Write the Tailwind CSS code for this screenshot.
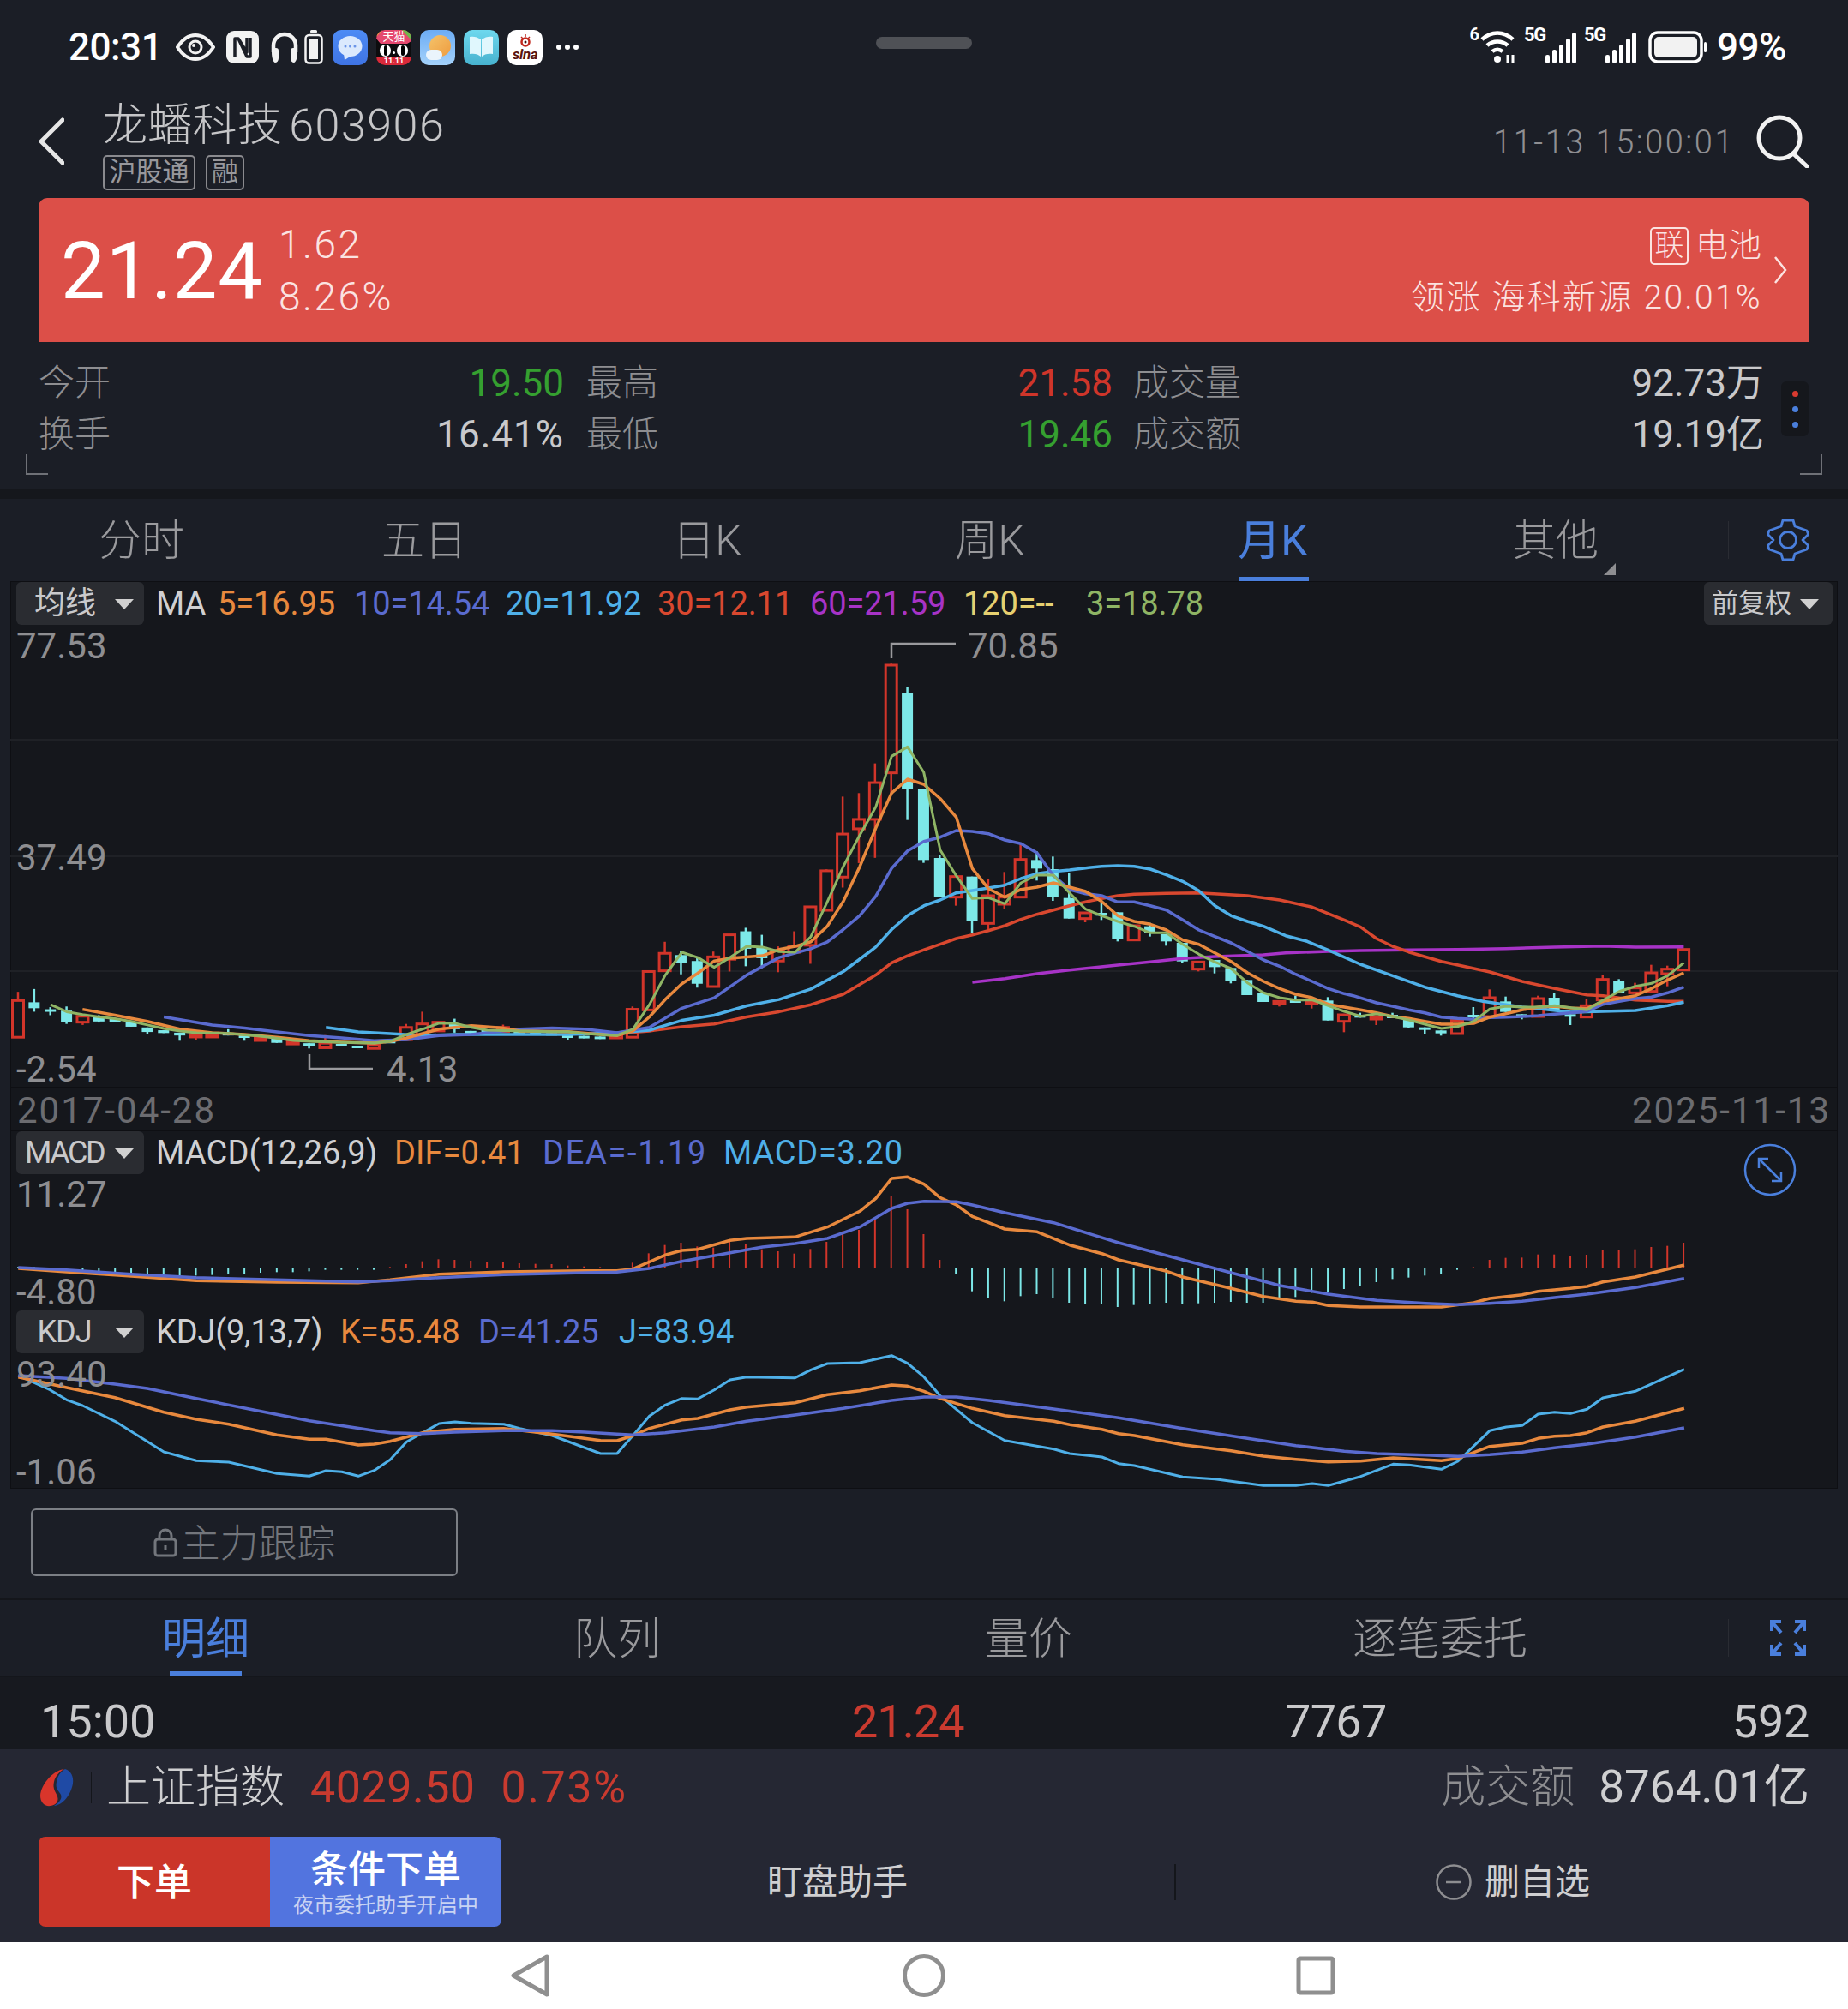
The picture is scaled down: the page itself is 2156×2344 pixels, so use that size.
<!DOCTYPE html>
<html lang="zh-CN">
<head>
  <meta charset="UTF-8" />
  <title>龙蟠科技 603906</title>
  <script src="https://cdn.jsdelivr.net/npm/@tailwindcss/browser@4"></script>
</head>
<body class="bg-[#1b1e26] font-[Roboto,'Noto_Sans_CJK_SC',sans-serif] text-[#c9c9cb]">
<div class="w-[2156px] h-[2344px] overflow-hidden flex flex-col">

  <!-- status bar -->
  <div class="relative h-[100px] shrink-0 flex items-center pl-[80px] pr-[72px] pt-[10px]">
    <span class="text-[44px] tracking-[-0.5px] text-white w-[125px] font-medium">20:31</span>
    <svg class="w-[46px] h-[32px] mr-[13px]" viewBox="0 0 46 32" fill="none" stroke="#f2f2f2" stroke-width="4"><path d="M2 16C9 5 16 2 23 2s14 3 21 14c-7 11-14 14-21 14S9 27 2 16z"/><circle cx="23" cy="16" r="8.500" fill="#f2f2f2" stroke="none"/><circle cx="23" cy="16" r="5.500" fill="#1b1e26" stroke="none"/><circle cx="21" cy="14" r="2" fill="#f2f2f2" stroke="none"/></svg>
    <svg class="w-[38px] h-[38px] mr-[13px]" viewBox="0 0 38 38"><rect x="0" y="0" width="38" height="38" rx="9" fill="#f2f2f2"/><path d="M10 30V9h4l10 16V8M14 9l10 21h4V8" fill="none" stroke="#1b1e26" stroke-width="3.500" stroke-linejoin="round"/></svg>
    <svg class="w-[34px] h-[38px] mr-[6px]" viewBox="0 0 34 38" fill="none" stroke="#f2f2f2" stroke-width="4.500"><path d="M4 25V17a13 13 0 0 1 26 0v8"/><path d="M2 25c0-3 2-5 5-5 2 0 3 1 3 3v9c0 3-2 5-4 5s-4-5-4-12zM32 25c0-3-2-5-5-5-2 0-3 1-3 3v9c0 3 2 5 4 5s4-5 4-12z" fill="#f2f2f2" stroke="none"/></svg>
    <svg class="w-[22px] h-[40px] mr-[11px]" viewBox="0 0 22 40" fill="none" stroke="#f2f2f2" stroke-width="2.500"><rect x="1.500" y="6" width="19" height="32.500" rx="4"/><rect x="6" y="11" width="10" height="23" fill="#f2f2f2" stroke="none"/><rect x="7" y="0" width="8" height="3.500" rx="1.500" fill="#f2f2f2" stroke="none"/></svg>
    <!-- app notification icons -->
    <div class="w-[41px] h-[41px] mr-[10px] rounded-[10px] bg-linear-to-b from-[#4d8bf5] to-[#3f74e4] flex items-center justify-center">
      <svg class="w-[33px] h-[33px]" viewBox="0 0 33 33"><ellipse cx="16.500" cy="15" rx="14" ry="12" fill="#dbe9fd"/><path d="M9 23l1 8 8-5z" fill="#dbe9fd"/><circle cx="11" cy="15" r="1.500" fill="#6b95e8"/><circle cx="16.500" cy="15" r="1.500" fill="#6b95e8"/><circle cx="22" cy="15" r="1.500" fill="#6b95e8"/></svg>
    </div>
    <div class="relative w-[41px] h-[41px] mr-[10px] rounded-[10px] overflow-hidden bg-[#0c0c0e]">
      <svg class="absolute top-0 left-0 w-[41px] h-[16px]" viewBox="0 0 41 16"><rect width="41" height="16" fill="#e5486e"/><path d="M30 0h11v12z" fill="#6fb84a"/><path d="M0 0h7L0 8z" fill="#e6a23a"/><path d="M0 16V10l5 6zM41 16V13l-5 3z" fill="#0c0c0e"/></svg>
      <div class="absolute bottom-0 inset-x-0 h-[10px] bg-[#d92a3a]"></div>
      <div class="absolute top-[17px] left-[4px] w-[13px] h-[14px] rounded-full bg-white"></div>
      <div class="absolute top-[17px] right-[4px] w-[13px] h-[14px] rounded-full bg-white"></div>
      <div class="absolute top-[18px] left-[8.500px] w-[4px] h-[12px] rounded-full bg-black"></div>
      <div class="absolute top-[18px] right-[8.500px] w-[4px] h-[12px] rounded-full bg-black"></div>
      <div class="absolute top-[25px] left-[19px] w-[3px] h-[3px] rounded-full bg-white"></div>
      <span class="absolute top-0 inset-x-0 text-center text-[13px] leading-[15px] text-white">天猫</span>
      <span class="absolute bottom-0 inset-x-0 text-center text-[9px] leading-[10px] font-bold text-white">11.11</span>
    </div>
    <div class="relative w-[41px] h-[41px] mr-[10px] rounded-[10px] overflow-hidden bg-linear-to-b from-[#6cacf4] to-[#a4d2fb]">
      <div class="absolute top-[6px] left-[11px] w-[25px] h-[25px] rounded-full bg-linear-to-br from-[#f4c36a] to-[#ee9c3e]"></div>
      <div class="absolute bottom-[6px] left-[7px] w-[19px] h-[12px] rounded-full bg-[#eaf4fc]"></div>
    </div>
    <div class="w-[41px] h-[41px] mr-[10px] rounded-[10px] bg-linear-to-b from-[#6ed8ee] to-[#47b2cf] flex items-center justify-center">
      <svg class="w-[31px] h-[29px]" viewBox="0 0 31 29"><path d="M15 5C11 2 6 1 2 2v20c5-1 10 0 13 3zM16 5c4-3 9-4 13-3v20c-5-1-10 0-13 3z" fill="#e0f7fd"/></svg>
    </div>
    <div class="w-[41px] h-[41px] mr-[16px] rounded-[10px] bg-white flex flex-col items-center justify-center leading-none">
      <svg class="w-[20px] h-[15px]" viewBox="0 0 20 15" fill="none" stroke="#c0281e" stroke-width="2.500"><circle cx="10" cy="9" r="4.500"/><circle cx="10" cy="9" r="1.500" fill="#3a1010" stroke="none"/><path d="M5 3l2 2M10 0v3M15 3l-2 2" stroke-width="1.500"/></svg>
      <span class="text-[17px] leading-[16px] font-bold italic tracking-[-0.5px] text-[#5a1410]">sina</span>
    </div>
    <span class="flex gap-[4px]"><i class="block w-[6px] h-[6px] rounded-full bg-white"></i><i class="block w-[6px] h-[6px] rounded-full bg-white"></i><i class="block w-[6px] h-[6px] rounded-full bg-white"></i></span>
    <div class="absolute left-[1022px] top-[43px] w-[112px] h-[14px] rounded-full bg-[#4f5156]"></div>
    <div class="ml-auto flex items-center text-white">
      <span class="text-[20px] leading-[20px] font-bold self-start -mt-[3px]">6</span>
      <svg class="w-[44px] h-[40px] mr-[8px]" viewBox="0 0 44 40" fill="none" stroke="#fff" stroke-width="4.500"><path d="M3 11c11-10 25-10 36 0M9 18c7-6 17-6 24 0M15 25c4-3 8-3 12 0"/><circle cx="21" cy="34" r="4" fill="#fff" stroke="none"/><path d="M33 29v10M39 29v10" stroke-width="3"/></svg>
      <span class="text-[22px] leading-[22px] font-bold self-start -mt-[3px] tracking-[-1.500px] w-[25px]">5G</span>
      <svg class="w-[36px] h-[38px] mr-[9px]" viewBox="0 0 36 38" fill="#fff"><rect x="0" y="28" width="5" height="10" rx="2"/><rect x="8" y="22" width="5" height="16" rx="2"/><rect x="16" y="16" width="5" height="22" rx="2"/><rect x="24" y="9" width="5" height="29" rx="2"/><rect x="31" y="2" width="5" height="36" rx="2"/></svg>
      <span class="text-[22px] leading-[22px] font-bold self-start -mt-[3px] tracking-[-1.500px] w-[25px]">5G</span>
      <svg class="w-[36px] h-[38px] mr-[14px]" viewBox="0 0 36 38" fill="#fff"><rect x="0" y="28" width="5" height="10" rx="2"/><rect x="8" y="22" width="5" height="16" rx="2"/><rect x="16" y="16" width="5" height="22" rx="2"/><rect x="24" y="9" width="5" height="29" rx="2"/><rect x="31" y="2" width="5" height="36" rx="2"/></svg>
      <svg class="w-[68px] h-[38px] mr-[12px]" viewBox="0 0 68 38" fill="none"><rect x="2" y="2" width="60" height="34" rx="9" stroke="#fff" stroke-width="3.500"/><rect x="7" y="7" width="50" height="24" rx="5" fill="#f2f2f2"/><rect x="65" y="13" width="3" height="12" rx="1.500" fill="#fff"/></svg>
      <span class="text-[44px] tracking-[-0.5px] font-medium leading-none">99%</span>
    </div>
  </div>

  <!-- header -->
  <div class="h-[131px] shrink-0 flex items-start pl-[45px] pr-[44px]">
    <svg class="w-[30px] h-[56px] mt-[37px] mr-[45px]" viewBox="0 0 30 56" fill="none" stroke="#e6e6e6" stroke-width="5" stroke-linecap="round" stroke-linejoin="round"><path d="M28 3L3 28l25 25"/></svg>
    <div class="flex flex-col">
      <div class="text-[52px] leading-[60px] h-[60px] mt-[17px] font-light text-[#c6c6c8] flex items-center"><span class="tracking-[0.3px]">龙蟠科技</span><span class="ml-[8px] tracking-[1.500px]">603906</span></div>
      <div class="flex gap-[12px] mt-[4px]">
        <span class="w-[108px] h-[41px] border-2 border-[#8a8a8e] rounded-[5px] text-[31px] leading-[36px] text-center text-[#98989c]">沪股通</span>
        <span class="w-[45px] h-[41px] border-2 border-[#8a8a8e] rounded-[5px] text-[31px] leading-[36px] text-center text-[#98989c]">融</span>
      </div>
    </div>
    <span class="ml-auto mt-[46px] mr-[26px] text-[38px] leading-[40px] tracking-[2.500px] font-light text-[#8f8f92]">11-13 15:00:01</span>
    <svg class="w-[62px] h-[62px] mt-[34px] -translate-x-[1px]" viewBox="0 0 62 62" fill="none" stroke="#f2f2f2" stroke-width="5" stroke-linecap="round"><circle cx="27" cy="27" r="24"/><path d="M43 45l16 15"/></svg>
  </div>

  <!-- price banner -->
  <div class="mx-[45px] h-[168px] shrink-0 rounded-t-[10px] bg-[#dc4f48] flex items-center pl-[26px] pr-[26px] text-[#fbe3e1]">
    <span class="text-[92px] font-normal tracking-[1px] text-white w-[254px] leading-none pt-[4px]">21.24</span>
    <div class="flex flex-col text-[46px] leading-[61px] font-light tracking-[2.500px] pt-[2px]"><span>1.62</span><span>8.26%</span></div>
    <div class="ml-auto flex flex-col items-end font-light pt-[3px]">
      <div class="flex items-center h-[60px]"><span class="w-[45px] h-[44px] border-2 border-[#fbe3e1] rounded-[5px] text-[34px] leading-[38px] text-center mr-[8px]">联</span><span class="text-[38px] tracking-[1px]">电池</span></div>
      <div class="text-[39px] h-[60px] leading-[60px] tracking-[2.300px]">领涨 海科新源 20.01%</div>
    </div>
    <svg class="w-[16px] h-[34px] ml-[13px]" viewBox="0 0 16 34" fill="none" stroke="#fbe3e1" stroke-width="2.500"><path d="M2 2l12 15L2 32"/></svg>
  </div>

  <!-- stats -->
  <div class="relative h-[171px] shrink-0 pl-[45px] pt-[18px] text-[42px] leading-[60px] text-[#c9c9cb]">
    <div class="grid grid-cols-[613px_26px_614px_24px_736px]">
      <div class="flex justify-between"><span class="font-light text-[#8e8e91]">今开</span><span class="text-[44px] text-[#35a030]">19.50</span></div><div></div>
      <div class="flex justify-between"><span class="font-light text-[#8e8e91]">最高</span><span class="text-[44px] text-[#cf352a]">21.58</span></div><div></div>
      <div class="flex justify-between"><span class="font-light text-[#8e8e91]">成交量</span><span class="text-[44px]">92.73万</span></div>
      <div class="flex justify-between"><span class="font-light text-[#8e8e91]">换手</span><span class="text-[44px] tracking-[1px]">16.41%</span></div><div></div>
      <div class="flex justify-between"><span class="font-light text-[#8e8e91]">最低</span><span class="text-[44px] text-[#35a030]">19.46</span></div><div></div>
      <div class="flex justify-between"><span class="font-light text-[#8e8e91]">成交额</span><span class="text-[44px]">19.19亿</span></div>
    </div>
    <div class="absolute left-[2078px] top-[46px] w-[32px] h-[64px] rounded-[6px] bg-[#15171c] flex flex-col items-center justify-center gap-[11px]">
      <i class="block w-[7px] h-[7px] rounded-full bg-[#d93a30]"></i><i class="block w-[7px] h-[7px] rounded-full bg-[#4a7fdc]"></i><i class="block w-[7px] h-[7px] rounded-full bg-[#4a7fdc]"></i>
    </div>
    <svg class="absolute left-[30px] top-[131px] w-[26px] h-[24px]" viewBox="0 0 26 24" fill="none" stroke="#6f7177" stroke-width="2"><path d="M1 0v23h25"/></svg>
    <svg class="absolute left-[2100px] top-[131px] w-[26px] h-[24px]" viewBox="0 0 26 24" fill="none" stroke="#6f7177" stroke-width="2"><path d="M25 0v23H0"/></svg>
  </div>
  <div class="h-[12px] shrink-0 bg-[#15171c]"></div>

  <!-- period tabs -->
  <div class="h-[96px] shrink-0 flex items-center text-[50px] font-light text-[#9a9a9d]">
    <div class="w-[330px] text-center pt-[2px]">分时</div>
    <div class="w-[330px] text-center pt-[2px]">五日</div>
    <div class="w-[330px] text-center pt-[2px]">日K</div>
    <div class="w-[330px] text-center pt-[2px]">周K</div>
    <div class="relative w-[330px] text-center text-[#4a7fdc] font-normal h-full flex items-center justify-center pt-[2px]">月K<i class="absolute bottom-0 left-[125px] w-[82px] h-[5px] bg-[#4a7fdc]"></i></div>
    <div class="relative w-[330px] text-center pt-[2px]">其他<i class="absolute right-[95px] bottom-[-2px] w-0 h-0 border-l-[14px] border-l-transparent border-b-[14px] border-b-[#8e8e91]"></i></div>
    <div class="w-px h-[44px] bg-[#2a2c33] ml-[36px]"></div>
    <svg class="w-[60px] h-[60px] ml-[39px]" viewBox="17 10 60 60" fill="none" stroke="#4a7fdc" stroke-width="2.800" stroke-linejoin="round"><path d="M41 17H53L55 24L62 26.500L69 29L70.700 33.500L64 40L70.700 46.500L69 51L62 53.500L55 56L53 63H41L39 56L32 53.500L25 51L23.500 46.500L30 40L23.500 33.500L25 29L32 26.500L39 24Z"/><circle cx="47" cy="40" r="9.500"/></svg>
  </div>

  <!-- chart -->
  <div class="mx-[12px] w-[2132px] shrink-0 bg-[#15171c] border-x border-[#0e0f13] text-[42px]">
    <div class="relative h-[590px] border-t border-[#0e0f13]">
      <svg id="mainChart" class="absolute -left-px -top-px w-[2132px] h-[590px]" viewBox="12 678 2132 590"></svg>
      <div class="relative flex items-center h-[50px] pl-[6px] text-[38px] whitespace-nowrap">
        <div class="relative w-[149px] h-[50px] rounded-[6px] bg-[#2a2c31] flex items-center text-[36px] text-[#c9c9cb]"><span class="w-[114px] text-center">均线</span><i class="absolute right-[12px] top-[20px] w-0 h-0 border-x-[11px] border-x-transparent border-t-[12px] border-t-[#d0d0d0]"></i></div>
        <span class="absolute left-[169px] text-[#d0d0d2]">MA</span>
        <span class="absolute left-[241px] tracking-[-0.1px] text-[#e8893e]">5=16.95</span>
        <span class="absolute left-[400px] tracking-[-0.1px] text-[#5a6bcf]">10=14.54</span>
        <span class="absolute left-[577px] tracking-[-0.1px] text-[#4fb0e8]">20=11.92</span>
        <span class="absolute left-[754px] tracking-[-0.1px] text-[#d9482f]">30=12.11</span>
        <span class="absolute left-[932px] tracking-[-0.1px] text-[#a733c7]">60=21.59</span>
        <span class="absolute left-[1111px] tracking-[-0.1px] text-[#e6d070]">120=--</span>
        <span class="absolute left-[1254px] tracking-[-0.1px] text-[#8fb565]">3=18.78</span>
        <div class="absolute left-[1975px] top-0 w-[150px] h-[50px] rounded-[6px] bg-[#2a2c31] flex items-center pl-[9px] text-[31px] text-[#c9c9cb]"><span>前复权</span><i class="absolute right-[16px] top-[20px] w-0 h-0 border-x-[11px] border-x-transparent border-t-[12px] border-t-[#d0d0d0]"></i></div>
      </div>
      <span class="absolute left-[6px] top-[50px] leading-[50px] text-[#8e8e91]">77.53</span>
      <span class="absolute left-[6px] top-[297px] leading-[50px] text-[#8e8e91]">37.49</span>
      <span class="absolute left-[6px] top-[544px] leading-[50px] text-[#8e8e91]">-2.54</span>
      <span class="absolute left-[1116px] top-[50px] leading-[50px] text-[#8e8e91]">70.85</span>
      <span class="absolute left-[438px] top-[544px] leading-[50px] tracking-[0.5px] text-[#8e8e91]">4.13</span>
    </div>
    <div class="h-[51px] flex items-center justify-between px-[7px] pt-[3px] border-t border-[#0e0f13] tracking-[2px] text-[#6c6c70]"><span>2017-04-28</span><span>2025-11-13</span></div>
    <div class="relative h-[209px] border-t border-[#0e0f13]">
      <svg id="macdChart" class="absolute -left-px -top-px w-[2132px] h-[209px]" viewBox="12 1319 2132 209"></svg>
      <div class="relative flex items-center h-[50px] pl-[6px] text-[38px] whitespace-nowrap">
        <div class="relative w-[149px] h-[50px] rounded-[6px] bg-[#2a2c31] flex items-center text-[36px] text-[#c9c9cb] tracking-[-2.500px]"><span class="w-[112px] text-center">MACD</span><i class="absolute right-[12px] top-[20px] w-0 h-0 border-x-[11px] border-x-transparent border-t-[12px] border-t-[#d0d0d0]"></i></div>
        <span class="absolute left-[169px] tracking-[0.2px] text-[#d0d0d2]">MACD(12,26,9)</span>
        <span class="absolute left-[447px] tracking-[0.1px] text-[#e8893e]">DIF=0.41</span>
        <span class="absolute left-[620px] tracking-[1.700px] text-[#5a6bcf]">DEA=-1.19</span>
        <span class="absolute left-[831px] tracking-[0.8px] text-[#4fb0e8]">MACD=3.20</span>
      </div>
      <span class="absolute left-[6px] top-[49px] leading-[50px] text-[#8e8e91]">11.27</span>
      <span class="absolute left-[6px] top-[163px] leading-[50px] text-[#8e8e91]">-4.80</span>
      <svg class="absolute left-[2021px] top-[14px] w-[62px] h-[62px]" viewBox="0 0 62 62" fill="none" stroke="#4a7fdc" stroke-width="2.500"><circle cx="31" cy="31" r="29"/><path d="M18 18l26 26M18 29V18h11M44 33v11H33" stroke-width="2.500"/></svg>
    </div>
    <div class="relative h-[209px] border-y border-[#0e0f13]">
      <svg id="kdjChart" class="absolute -left-px -top-px w-[2132px] h-[209px]" viewBox="12 1528 2132 209"></svg>
      <span class="absolute left-[6px] top-[50px] leading-[50px] text-[#8e8e91]">93.40</span>
      <span class="absolute left-[6px] top-[164px] leading-[50px] text-[#8e8e91]">-1.06</span>
      <div class="relative flex items-center h-[50px] pl-[6px] text-[38px] whitespace-nowrap">
        <div class="relative w-[149px] h-[50px] rounded-[6px] bg-[#2a2c31] flex items-center text-[36px] text-[#c9c9cb]"><span class="w-[112px] text-center tracking-[-1px]">KDJ</span><i class="absolute right-[12px] top-[20px] w-0 h-0 border-x-[11px] border-x-transparent border-t-[12px] border-t-[#d0d0d0]"></i></div>
        <span class="absolute left-[169px] tracking-[-0.2px] text-[#d0d0d2]">KDJ(9,13,7)</span>
        <span class="absolute left-[384px] tracking-[-0.1px] text-[#e8893e]">K=55.48</span>
        <span class="absolute left-[545px] tracking-[-0.1px] text-[#5a6bcf]">D=41.25</span>
        <span class="absolute left-[709px] tracking-[-0.5px] text-[#4fb0e8]">J=83.94</span>
      </div>
    </div>
  </div>

  <!-- locked feature button -->
  <div class="h-[128px] shrink-0 pl-[36px] pt-[23px]">
    <div class="w-[498px] h-[79px] border-2 border-[#7c7f85] rounded-[6px] flex items-center justify-center gap-[3px] text-[45px] font-light text-[#73767c]">
      <svg class="w-[30px] h-[34px]" viewBox="0 0 30 34" fill="none" stroke="#73767c" stroke-width="3"><rect x="3" y="13" width="24" height="19" rx="3"/><path d="M8 13V9a7 7 0 0 1 14 0v4"/><path d="M15 20v5"/></svg>
      <span class="pt-[4px]">主力跟踪</span>
    </div>
  </div>

  <!-- detail tabs -->
  <div class="h-[92px] shrink-0 flex items-center border-y-2 border-[#14161b] text-[51px] font-light text-[#9a9a9d]">
    <div class="relative w-[480px] h-full flex items-center justify-center text-[#4a7fdc] font-normal pt-[5px]">明细<i class="absolute bottom-0 left-[198px] w-[84px] h-[5px] bg-[#4a7fdc]"></i></div>
    <div class="w-[480px] text-center pt-[5px]">队列</div>
    <div class="w-[480px] text-center pt-[5px]">量价</div>
    <div class="w-[480px] text-center pt-[5px]">逐笔委托</div>
    <div class="w-px h-[44px] bg-[#2a2c33] ml-[96px]"></div>
    <svg class="w-[42px] h-[42px] ml-[48px]" viewBox="0 0 42 42" fill="none" stroke="#4a7fdc" stroke-width="4"><path d="M2 13V2h11M2 2l11 13M40 13V2H29M40 2L29 15M2 29v11h11M2 40l11-13M40 29v11H29M40 40L29 27"/></svg>
  </div>

  <!-- last trade row -->
  <div class="h-[84px] shrink-0 bg-[#17191f] relative text-[54px] leading-[83px]">
    <span class="absolute left-[47px] top-[10px]">15:00</span>
    <span class="absolute left-[994px] top-[10px] tracking-[-1px] text-[#c93a2f]">21.24</span>
    <span class="absolute left-[1499px] top-[10px] tracking-[-0.7px]">7767</span>
    <span class="absolute right-[45px] top-[10px] tracking-[-0.3px]">592</span>
  </div>

  <!-- index bar + actions -->
  <div class="h-[225px] shrink-0 bg-[#252733] flex flex-col px-[45px]">
    <div class="h-[102px] pb-[12px] flex items-center text-[52px]">
      <svg class="w-[42px] h-[48px]" viewBox="0 0 42 48"><path d="M31 2c7 2 10 9 9 17-2 12-11 25-22 26 5-3 10-8 8-13-2-4-7-7-5-15 1-7 5-12 10-15z" fill="#1f4aa5"/><path d="M30 2C16 4 3 20 2 33c0 8 5 13 12 12 6-1 10-5 8-11-2-5-6-9-4-17 1-6 6-12 12-15z" fill="#d9352b"/></svg>
      <i class="block w-px h-[36px] bg-[#14161b] ml-[19px] mr-[17px]"></i>
      <span class="font-light text-[#cfcfd1]">上证指数</span>
      <span class="ml-[30px] text-[#c93a2f] tracking-[0.5px]">4029.50</span>
      <span class="ml-[30px] text-[#c93a2f] tracking-[1.500px]">0.73%</span>
      <span class="ml-auto font-light text-[#8e8e91]">成交额</span>
      <span class="ml-[28px] text-[53px] text-[#cfcfd1]">8764.01亿</span>
    </div>
    <div class="flex items-center h-[105px]">
      <div class="w-[270px] h-[105px] rounded-l-[8px] bg-[#cb3529] flex items-center justify-center text-[44px] font-medium text-white pt-[2px]">下单</div>
      <div class="w-[270px] h-[105px] rounded-r-[8px] bg-[#5274df] flex flex-col items-center justify-center text-white pt-[2px]">
        <span class="text-[44px] leading-[52px] font-medium">条件下单</span>
        <span class="text-[24px] leading-[30px] text-[#c8d3f3]">夜市委托助手开启中</span>
      </div>
      <span class="ml-[310px] w-[167px] text-[41px] text-[#cfcfd1] pt-[2px]">盯盘助手</span>
      <i class="block ml-[308px] w-[2px] h-[42px] bg-[#14161b]"></i>
      <svg class="ml-[303px] w-[42px] h-[42px]" viewBox="0 0 42 42" fill="none" stroke="#8e8e91" stroke-width="2.500"><circle cx="21" cy="21" r="19.500"/><path d="M12 21h18"/></svg>
      <span class="ml-[15px] text-[41px] text-[#cfcfd1] pt-[2px]">删自选</span>
    </div>
  </div>

  <!-- system nav bar -->
  <div class="h-[78px] shrink-0 bg-white flex items-center pl-[596px]">
    <svg class="w-[46px] h-[50px]" viewBox="0 0 46 50" fill="none" stroke="#8f8f8f" stroke-width="5" stroke-linejoin="round"><path d="M42 3v44L3 25z"/></svg>
    <svg class="w-[50px] h-[50px] ml-[411px]" viewBox="0 0 50 50" fill="none" stroke="#8f8f8f" stroke-width="5"><circle cx="25" cy="25" r="22.500"/></svg>
    <svg class="w-[46px] h-[46px] ml-[409px]" viewBox="0 0 46 46" fill="none" stroke="#8f8f8f" stroke-width="5" stroke-linejoin="round"><rect x="3" y="3" width="40" height="40" rx="2"/></svg>
  </div>
</div>

<script>
  // coordinates were read off zoomed crops, so each helper maps a crop back to page pixels
  const z3 = ([x, y]) => [x / 1.4545, 660 + y / 2.45];
  const z4 = ([x, y]) => [900 + x / 2.24, 740 + y / 3];
  const z5 = ([x, y]) => [1500 + x / 2.39, 960 + y / 3];
  const z6 = ([x, y]) => [x / 1.4545, 1300 + y / 3];
  const z7 = ([x, y]) => [1078 + x / 1.4545, 1300 + y / 3];

  const RED = "#d2352a", CYAN = "#7de8e8";
  const ORANGE = "#e8893e", BLUE = "#5a6bcf", SKY = "#4fb0e8", ORED = "#d9482f", PURPLE = "#a733c7", GREEN = "#8fb565";
  const xAt = i => 21 + 18.865 * i;

  // [colour r/c, wick top, body top, body bottom, wick bottom]
  const candles3 = [["r",1218,1243,1348,1348],["c",1210,1248,1265,1275],["c",1262,1268,1275,1285],["c",1260,1272,1305,1310],["r",1288,1288,1305,1313],["c",1285,1290,1303,1306],["c",1296,1296,1305,1305],["c",1305,1305,1318,1318],["c",1320,1320,1333,1338],["c",1328,1328,1336,1336],["c",1335,1335,1343,1358],["r",1340,1340,1345,1355],["r",1340,1340,1343,1350],["c",1325,1335,1343,1343],["c",1340,1340,1350,1358],["r",1350,1350,1356,1356],["c",1352,1352,1364,1364],["r",1360,1360,1366,1366],["c",1365,1365,1372,1380],["r",1342,1365,1378,1378],["c",1367,1367,1372,1372],["c",1372,1372,1378,1378],["r",1370,1370,1380,1380],["c",1358,1358,1362,1362],["r",1310,1320,1355,1355],["r",1275,1310,1345,1345],["r",1305,1305,1330,1330],["c",1295,1310,1325,1335],["c",1330,1330,1337,1337],["c",1327,1327,1332,1332],["r",1312,1320,1332,1332],["c",1330,1330,1337,1337],["c",1332,1332,1336,1336],["c",1336,1336,1340,1340],["c",1342,1342,1350,1355],["c",1344,1344,1351,1351],["c",1346,1346,1353,1353],["r",1342,1342,1350,1350],["r",1260,1268,1348,1348],["r",1160,1160,1270,1270],["r",1075,1108,1158,1158],["c",1100,1113,1135,1168],["c",1118,1130,1195,1206],["r",1103,1118,1203,1203],["r",1055,1055,1125,1160],["c",1035,1045,1095,1145],["c",1055,1090,1122,1150],["r",1088,1100,1130,1162],["r",1045,1088,1105,1108],["r",975,975,1085,1138],["r",868,872,985,985],["r",660,767,890,920],["r",650,725,752,850],["r",565,620,725,835]];
  const candles4 = [["r",103,108,485,560],["c",183,205,540,650],["c",543,543,790,800],["c",773,783,918,918],["r",848,848,920,950],["c",848,848,1003,1045],["r",855,915,1012,1035],["r",832,920,945,960],["r",733,788,920,920],["c",760,790,820,862],["c",778,822,920,933],["c",835,923,995,995],["r",975,975,995,1008],["c",940,975,985,1000],["c",973,973,1067,1075],["r",1020,1020,1070,1070],["c",1010,1022,1045,1058],["c",1050,1050,1075,1090],["c",1080,1080,1145,1152],["r",1147,1147,1172,1180],["c",1140,1140,1165,1187],["c",1168,1168,1212,1222],["c",1210,1210,1263,1263],["c",1255,1255,1287,1287],["r",1285,1285,1292,1303],["c",1265,1280,1290,1290],["r",1285,1285,1292,1310]];
  const candles5 = [["c",610,622,692,692],["r",672,672,695,733],["c",665,672,682,682],["r",678,678,684,708],["c",665,672,684,684],["c",688,688,716,720],["c",716,716,724,738],["c",727,727,737,745],["r",692,692,738,738],["c",645,672,680,695],["r",583,612,678,678],["c",608,625,662,662],["c",670,670,675,688],["r",605,615,678,678],["c",595,612,655,655],["c",670,670,677,708],["r",618,640,680,680],["r",532,548,620,620],["c",547,552,595,595],["r",560,578,595,595],["r",497,525,590,590],["r",500,512,528,572],["r",443,443,515,515]];

  const ma3 = [...[[86,1255],[113,1275],[140,1283],[168,1290],[195,1295],[223,1303],[250,1313],[278,1323],[305,1330],[333,1335],[388,1337],[443,1345],[498,1357],[525,1360],[580,1363],[635,1365],[662,1360],[690,1340],[717,1325],[745,1308],[772,1308],[800,1320],[827,1328],[882,1330],[937,1332],[964,1332],[992,1338],[1047,1343],[1074,1325],[1102,1255],[1129,1170],[1157,1105],[1184,1120],[1212,1148],[1239,1120],[1267,1088],[1294,1090],[1322,1103],[1349,1105],[1376,1060],[1404,960],[1431,860],[1459,770],[1486,690],[1513,545],[1540,518]].map(z3),
    ...[[398,483],[441,755],[483,845],[525,925],[567,922],[610,943],[652,870],[694,843],[737,843],[779,905],[821,962],[863,985],[905,1005],[948,1022],[990,1045],[1032,1045],[1075,1085],[1117,1120],[1159,1147],[1201,1170],[1244,1220],[1286,1255],[1328,1272],[1370,1280],[1413,1280],[1455,1300],[1497,1320],[1540,1337]].map(z4),
    ...[[253,668],[298,678],[343,690],[388,705],[434,720],[479,713],[524,695],[569,652],[614,642],[659,645],[704,645],[750,640],[795,647],[840,655],[885,620],[930,590],[975,572],[1020,562],[1065,535],[1110,490]].map(z5)];
  const ma5 = [...[[140,1268],[195,1285],[250,1303],[305,1325],[360,1335],[415,1340],[470,1348],[525,1358],[580,1362],[635,1365],[662,1360],[690,1350],[745,1325],[772,1320],[800,1315],[855,1322],[882,1330],[964,1332],[1019,1340],[1047,1343],[1074,1330],[1102,1290],[1129,1240],[1157,1195],[1184,1165],[1212,1130],[1239,1122],[1294,1115],[1322,1097],[1349,1088],[1376,1075],[1404,1030],[1431,960],[1459,860],[1486,750],[1513,650],[1540,610]].map(z3),
    ...[[398,525],[441,575],[483,640],[525,820],[567,890],[610,920],[652,893],[694,885],[737,870],[779,885],[821,900],[863,935],[905,985],[948,1005],[990,1015],[1032,1035],[1075,1070],[1117,1085],[1159,1115],[1201,1145],[1244,1185],[1286,1215],[1328,1240],[1370,1260],[1413,1272],[1455,1295],[1497,1305],[1540,1315]].map(z4),
    ...[[253,665],[298,678],[343,685],[388,695],[434,705],[479,705],[524,702],[569,680],[614,668],[659,655],[704,645],[750,642],[795,648],[840,650],[885,625],[930,615],[975,605],[1020,580],[1065,550],[1110,525]].map(z5)];
  const ma10 = [...[[278,1290],[360,1313],[415,1322],[470,1333],[525,1343],[580,1350],[635,1358],[690,1355],[745,1343],[800,1340],[882,1325],[937,1322],[992,1325],[1047,1335],[1102,1320],[1157,1265],[1212,1235],[1267,1170],[1322,1120],[1376,1095],[1404,1075],[1431,1040],[1459,1000],[1486,945],[1513,865],[1540,815]].map(z3),
    ...[[398,725],[441,710],[483,687],[525,690],[567,698],[610,720],[652,733],[694,765],[737,845],[779,893],[821,908],[863,915],[905,937],[948,937],[990,950],[1032,965],[1075,1000],[1117,1035],[1159,1058],[1201,1080],[1244,1110],[1286,1140],[1328,1162],[1370,1190],[1413,1215],[1455,1240],[1497,1258]].map(z4),
    ...[[188,605],[253,630],[298,642],[343,655],[388,665],[434,680],[479,685],[524,688],[569,682],[614,680],[659,678],[704,675],[750,670],[795,665],[840,660],[885,635],[930,625],[975,615],[1020,610],[1065,595],[1110,575]].map(z5)];
  const ma20 = [...[[553,1320],[608,1333],[662,1338],[717,1343],[772,1340],[882,1340],[964,1340],[1047,1335],[1102,1328],[1157,1300],[1212,1285],[1267,1258],[1322,1240],[1376,1210],[1431,1160],[1486,1090],[1513,1040],[1540,1000],[1568,972]].map(z3),
    ...[[441,930],[483,905],[525,897],[567,888],[610,878],[652,855],[694,838],[737,830],[779,825],[821,818],[863,812],[905,810],[948,812],[990,822],[1032,842],[1075,865],[1117,898],[1159,950],[1201,985],[1244,1005],[1286,1022]].map(z4),
    ...[[0,395],[60,415],[118,445],[208,495],[298,535],[388,575],[479,605],[550,625],[659,645],[704,650],[795,663],[885,660],[975,657],[1065,640],[1110,628]].map(z5)];
  const ma30 = [...[[1047,1338],[1102,1330],[1157,1318],[1212,1310],[1267,1290],[1322,1275],[1376,1255],[1431,1225],[1486,1170],[1513,1135],[1540,1115],[1568,1098]].map(z3),
    ...[[441,1085],[483,1065],[525,1052],[567,1037],[610,1020],[652,998],[694,980],[737,965],[779,950],[821,937],[863,925],[905,915],[948,910],[1032,907],[1117,905],[1244,915],[1328,930],[1413,955],[1497,1000],[1540,1025]].map(z4),
    ...[[253,405],[298,432],[343,452],[434,485],[569,522],[659,555],[750,580],[840,602],[885,605],[975,620],[1065,625],[1110,625]].map(z5)];
  const ma60 = [...[[525,1218],[610,1205],[694,1188],[779,1175],[905,1158],[990,1147],[1075,1135],[1159,1128],[1286,1122]].map(z4),
    ...[[0,455],[118,450],[208,447],[343,445],[479,443],[614,440],[750,435],[885,431],[975,435],[1110,434]].map(z5)];

  const dif = [...[[31,540],[113,552],[223,567],[333,583],[470,588],[608,590],[662,580],[745,560],[855,552],[992,548],[1047,548],[1074,542],[1129,493],[1157,477],[1184,473],[1239,442],[1267,435],[1349,430],[1404,395],[1459,340],[1486,295],[1513,225],[1540,220],[1568,245]].map(z6),
    ...[[27,292],[55,318],[82,358],[110,380],[137,402],[192,412],[247,458],[302,488],[330,510],[412,550],[439,570],[521,610],[576,638],[631,655],[659,658],[686,670],[741,675],[878,675],[933,660],[960,645],[1015,632],[1042,620],[1097,610],[1125,603],[1152,587],[1207,570],[1262,542],[1290,528]].map(z7)];
  const dea = [...[[31,537],[113,545],[223,560],[333,572],[470,580],[608,587],[662,583],[745,572],[855,562],[992,555],[1047,553],[1102,540],[1157,515],[1239,485],[1294,465],[1349,453],[1404,435],[1459,395],[1513,330],[1540,312],[1568,305]].map(z6),
    ...[[55,307],[82,318],[137,345],[220,380],[330,450],[412,495],[521,555],[604,600],[686,630],[768,652],[851,662],[906,667],[960,662],[1015,655],[1070,642],[1125,630],[1207,607],[1290,575]].map(z7)];
  // macd bar ends, crop coordinates (the baseline sits at 540)
  const macdBars = [535,535,537,537,548,550,553,555,565,568,570,565,563,560,558,555,553,553,550,545,545,545,545,535,525,515,508,510,513,517,519,522,524,525,530,533,535,537,520,487,458,450,463,467,447,455,473,480,488,472,447,410,405,365,288,333,420,510,558,620,642,655,637,630,642,660,663,663,675,668,663,660,663,662,660,657,660,660,648,640,625,622,612,600,588,577,572,565,560,545,535,510,503,502,491,491,496,492,476,474,473,465,461,450];

  const kLine = [...[[31,920],[113,957],[195,992],[278,1043],[333,1068],[388,1085],[470,1123],[525,1138],[553,1138],[608,1158],[635,1155],[662,1145],[717,1115],[772,1103],[855,1100],[937,1120],[1019,1142],[1047,1143],[1074,1125],[1102,1100],[1157,1070],[1184,1065],[1239,1035],[1267,1025],[1349,1010],[1404,982],[1459,968],[1513,948],[1540,952],[1568,970]].map(z6),
    ...[[27,995],[82,1030],[137,1055],[220,1075],[247,1087],[302,1103],[330,1118],[357,1125],[439,1157],[521,1178],[576,1197],[631,1208],[686,1217],[741,1214],[796,1203],[878,1213],[906,1205],[960,1163],[1015,1152],[1042,1135],[1070,1127],[1097,1125],[1125,1115],[1152,1095],[1207,1075],[1290,1030]].map(z7)];
  const dLine = [...[[31,915],[113,925],[195,945],[250,960],[333,995],[443,1040],[525,1073],[635,1108],[662,1115],[717,1118],[772,1113],[855,1108],[937,1108],[992,1113],[1047,1120],[1074,1123],[1129,1115],[1212,1095],[1267,1075],[1349,1053],[1431,1030],[1513,1002],[1568,990]].map(z6),
    ...[[55,990],[110,1002],[220,1032],[330,1063],[439,1100],[549,1135],[631,1160],[713,1180],[768,1188],[851,1193],[906,1198],[960,1192],[1015,1183],[1070,1168],[1125,1155],[1207,1130],[1290,1098]].map(z7)];
  const jLine = [...[[31,915],[85,965],[113,1000],[140,1020],[195,1075],[278,1182],[333,1213],[388,1218],[470,1258],[525,1267],[553,1248],[580,1252],[608,1267],[635,1247],[662,1210],[690,1147],[745,1083],[772,1077],[800,1082],[855,1085],[882,1100],[937,1125],[1019,1188],[1047,1188],[1074,1125],[1102,1057],[1129,1018],[1157,995],[1184,997],[1212,965],[1239,930],[1267,920],[1349,923],[1376,895],[1404,873],[1459,870],[1513,845],[1540,872],[1568,920]].map(z6),
    ...[[27,985],[82,1080],[137,1142],[220,1172],[247,1188],[302,1200],[330,1223],[357,1230],[439,1270],[494,1277],[576,1300],[631,1300],[659,1293],[686,1300],[741,1268],[796,1225],[823,1228],[878,1243],[906,1215],[960,1108],[988,1095],[1015,1090],[1042,1050],[1070,1043],[1097,1048],[1125,1033],[1152,993],[1207,970],[1290,893]].map(z7)];

  const line = (pts, color, w) =>
    `<polyline points="${pts.map(p => p[0].toFixed(1) + "," + p[1].toFixed(1)).join(" ")}" fill="none" stroke="${color}" stroke-width="${w}" stroke-linejoin="round"/>`;
  const hLine = (y, x1, x2, color) => `<line x1="${x1}" x2="${x2}" y1="${y}" y2="${y}" stroke="${color}" stroke-width="2"/>`;

  function candle(i, c, toY) {
    const x = xAt(i);
    const [hi, top, bot, lo] = c.slice(1).map(toY);
    const color = c[0] === "r" ? RED : CYAN;
    let out = `<line x1="${x}" x2="${x}" y1="${hi}" y2="${lo}" stroke="${color}" stroke-width="2.500"/>`;
    if (c[0] === "r") {
      out = `<line x1="${x}" x2="${x}" y1="${hi}" y2="${top}" stroke="${color}" stroke-width="2.500"/><line x1="${x}" x2="${x}" y1="${bot}" y2="${lo}" stroke="${color}" stroke-width="2.500"/>`;
      out += `<rect x="${x - 6.5}" y="${top}" width="13" height="${Math.max(bot - top, 3)}" fill="none" stroke="${color}" stroke-width="3"/>`;
    } else {
      out += `<rect x="${x - 6.5}" y="${top}" width="13" height="${Math.max(bot - top, 3)}" fill="${color}"/>`;
    }
    return out;
  }

  let main = "";
  [863, 999, 1133].forEach(y => main += hLine(y, 12, 2144, "#1f2126"));
  candles3.forEach((c, n) => main += candle(n, c, y => 660 + y / 2.45));
  candles4.forEach((c, n) => main += candle(54 + n, c, y => 740 + y / 3));
  candles5.forEach((c, n) => main += candle(81 + n, c, y => 960 + y / 3));
  main += line(ma60, PURPLE, 3.5) + line(ma30, ORED, 3.5) + line(ma20, SKY, 3.5) + line(ma10, BLUE, 3.5) + line(ma5, ORANGE, 3.5) + line(ma3, GREEN, 3);
  main += `<path d="M1040 768V751H1115M361 1230V1247H435" fill="none" stroke="#9a9a9d" stroke-width="2.500"/>`;
  document.getElementById("mainChart").innerHTML = main;

  let macd = "";
  macdBars.forEach((b, i) => {
    const y = 1300 + b / 3;
    macd += `<line x1="${xAt(i)}" x2="${xAt(i)}" y1="1480" y2="${y}" stroke="${b < 540 && i > 22 ? RED : CYAN}" stroke-width="2"/>`;
  });
  macd += line(dif, ORANGE, 3.5) + line(dea, BLUE, 3.5);
  document.getElementById("macdChart").innerHTML = macd;

  document.getElementById("kdjChart").innerHTML = line(jLine, SKY, 3) + line(kLine, ORANGE, 3.5) + line(dLine, BLUE, 3.5);
</script>
</body>
</html>
